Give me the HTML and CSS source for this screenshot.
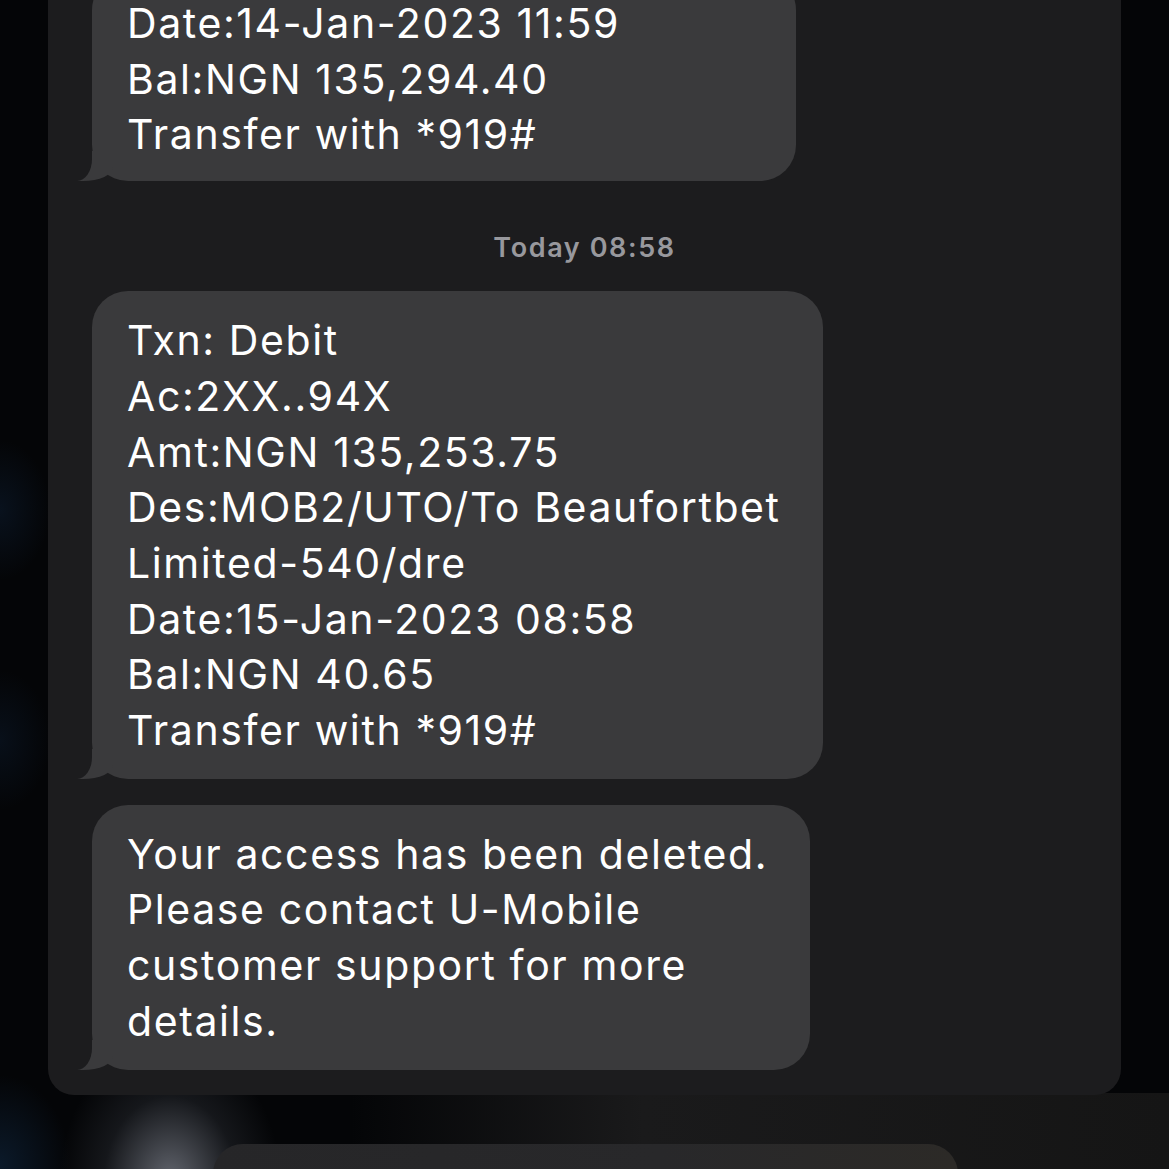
FILE: index.html
```html
<!DOCTYPE html>
<html lang="en">

<head>
    <meta charset="UTF-8">
    <meta name="viewport" content="width=device-width, initial-scale=1.0">
    <title>Messages</title>
    <link rel="stylesheet" href="styles.css">
</head>

<body>
    <div class="screen">
        <main class="thread">
            <div class="bubble bubble-first">
                Date:14-Jan-2023 11:59<br>
                Bal:NGN 135,294.40<br>
                Transfer with *919#
            </div>

            <div class="stamp">Today 08:58</div>

            <div class="bubble">
                Txn: Debit<br>
                Ac:2XX..94X<br>
                Amt:NGN 135,253.75<br>
                Des:MOB2/UTO/To Beaufortbet<br>
                Limited-540/dre<br>
                Date:15-Jan-2023 08:58<br>
                Bal:NGN 40.65<br>
                Transfer with *919#
            </div>

            <div class="bubble">
                Your access has been deleted.<br>
                Please contact U-Mobile<br>
                customer support for more<br>
                details.
            </div>
        </main>

        <div class="next-card"></div>
    </div>
</body>

</html>
```

FILE: styles.css
```css
* {
    margin: 0;
    padding: 0;
    box-sizing: border-box;
}

html,
body {
    width: 100%;
    height: 100%;
    overflow: hidden;
}

body {
    background-color: #040507;
    background-image:
        radial-gradient(ellipse 110px 140px at 170px 1180px, rgba(120, 124, 134, 0.8), rgba(60, 64, 72, 0.3) 60%, rgba(0, 0, 0, 0) 100%),
        radial-gradient(ellipse 70px 90px at 0 1165px, rgba(14, 34, 56, 0.7), rgba(0, 0, 0, 0)),
        radial-gradient(ellipse 50px 70px at 0 510px, rgba(12, 26, 44, 0.6), rgba(0, 0, 0, 0)),
        radial-gradient(ellipse 50px 70px at 0 740px, rgba(12, 26, 44, 0.5), rgba(0, 0, 0, 0)),
        linear-gradient(90deg, rgba(0, 0, 0, 0) 30%, #1a1a1b 55%, #151515 100%);
    background-size: 100% 100%, 100% 100%, 100% 100%, 100% 100%, 100% 80px;
    background-position: 0 0, 0 0, 0 0, 0 0, 0 1093px;
    background-repeat: no-repeat;
    font-family: Inter, "Noto Sans", sans-serif;
    color: #ffffff;
}

.screen {
    padding-left: 48px;
}

.thread {
    width: 1073px;
    background-color: #1c1c1e;
    border-radius: 0 0 26px 26px;
    padding: 0 44px 25px;
}

.bubble {
    position: relative;
    width: fit-content;
    background-color: #3a3a3c;
    border-radius: 36px;
    padding: 22px 42px 20px 35px;
    font-size: 41px;
    line-height: 55.7px;
    letter-spacing: 1.6px;
    white-space: nowrap;
    margin-bottom: 26px;
}

.bubble:last-child {
    margin-bottom: 0;
}

/* tail, bottom left */
.bubble::before {
    content: "";
    position: absolute;
    bottom: 0;
    left: -15px;
    width: 36px;
    height: 30px;
    background-color: #3a3a3c;
    border-bottom-right-radius: 30px 14px;
}

.bubble::after {
    content: "";
    position: absolute;
    bottom: 0;
    left: -30px;
    width: 30px;
    height: 32px;
    background-color: #1c1c1e;
    border-bottom-right-radius: 15px 22px;
}

.bubble-first {
    width: 704px;
    margin-top: -26px;
    margin-bottom: 0;
    padding-bottom: 18px;
}

.stamp {
    text-align: center;
    padding: 50px 0 26px;
    font-size: 27px;
    line-height: 34px;
    font-weight: 600;
    color: #98989d;
    letter-spacing: 1.6px;
}

.next-card {
    margin: 49px 0 0 165px;
    width: 745px;
    height: 80px;
    border-radius: 30px 30px 0 0;
    background: linear-gradient(90deg, #262628 0%, #28282a 60%, #2c2a27 100%);
}
```
